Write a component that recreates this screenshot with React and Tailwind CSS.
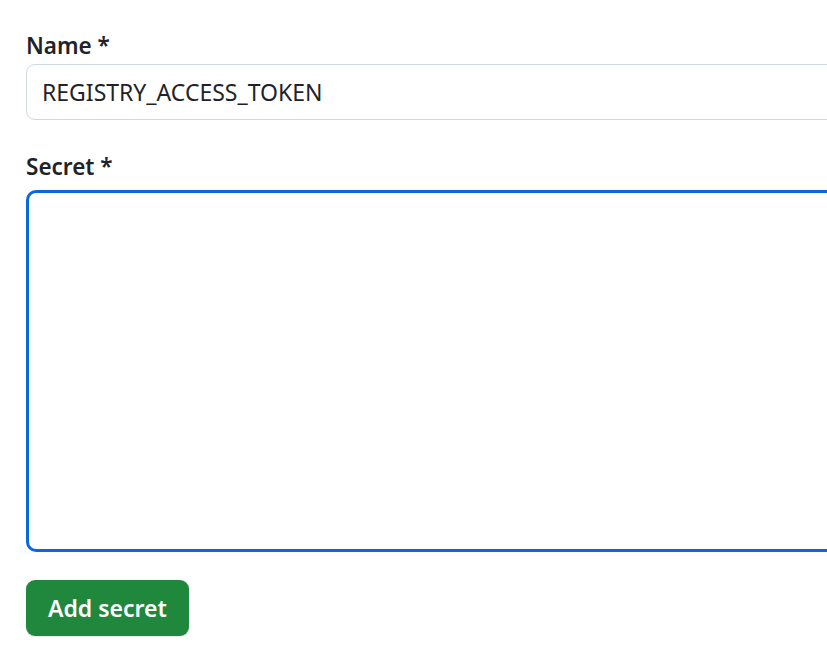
import React from 'react'

const App = () => {
  return (
    <div
      className="w-[827px] h-[666px] overflow-hidden bg-white text-[#1f2328]"
      style={{ fontFamily: '"Noto Sans", "Open Sans", sans-serif' }}
    >
      <form className="w-[1000px] pl-[26px] pt-[28px]">
        {/* Name */}
        <label className="block text-[22.5px] leading-[36px] font-semibold">Name *</label>
        <input
          type="text"
          defaultValue="REGISTRY_ACCESS_TOKEN"
          className="block w-full h-[56px] px-[15px] text-[23px] text-[#1f2328] bg-white border border-[#d1d9e0] rounded-[9px] outline-none"
        />

        {/* Secret */}
        <label className="block mt-[29px] text-[22.5px] leading-[36px] font-semibold">Secret *</label>
        <textarea className="block w-full h-[362px] mt-[5px] border-[3px] border-[#0969da] rounded-[10px] resize-none outline-none" />

        {/* Submit */}
        <button
          type="button"
          className="mt-[28px] h-[56px] px-[22px] rounded-[9px] bg-[#1f883d] text-white text-[23px] font-semibold shadow-[0_1px_0_rgba(31,35,40,0.1)]"
        >
          Add secret
        </button>
      </form>
    </div>
  )
}

export default App
